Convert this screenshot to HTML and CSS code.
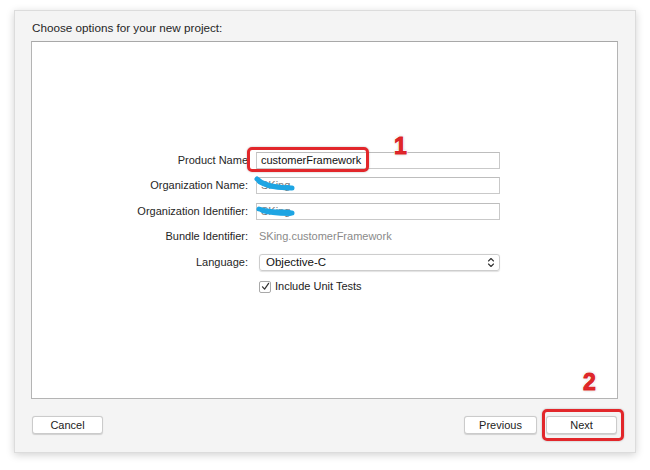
FILE: index.html
```html
<!DOCTYPE html>
<html>
<head>
<meta charset="utf-8">
<link rel="stylesheet" href="styles.css">
</head>
<body>
<div class="window">
  <div class="title">Choose options for your new project:</div>
  <div class="content">
    <div class="form">
      <div class="label">Product Name</div>
      <div class="field">customerFramework</div>
      <div class="label">Organization Name:</div>
      <div class="field dim">SKing</div>
      <div class="label">Organization Identifier:</div>
      <div class="field dim">SKing</div>
      <div class="label">Bundle Identifier:</div>
      <div class="static">SKing.customerFramework</div>
      <div class="label">Language:</div>
      <div class="popup"><span>Objective-C</span>
        <svg class="arrows" width="8" height="11" viewBox="0 0 8 11"><path d="M1.5 4 L4 1.5 L6.5 4 M1.5 7 L4 9.5 L6.5 7" fill="none" stroke="#333" stroke-width="1.1" stroke-linecap="round" stroke-linejoin="round"/></svg>
      </div>
      <div class="label"></div>
      <div class="check"><span class="box"><svg width="9" height="9" viewBox="0 0 9 9"><path d="M1.5 4.8 L3.6 7.2 L7.6 1.3" fill="none" stroke="#333" stroke-width="1.2" stroke-linecap="round" stroke-linejoin="round"/></svg></span>Include Unit Tests</div>
    </div>
  </div>
  <div class="buttons">
    <div class="btn">Cancel</div>
    <div class="spacer"></div>
    <div class="btn prev">Previous</div>
    <div class="btn next">Next</div>
  </div>
</div>
<div class="mark box1"></div>
<div class="mark box2"></div>
<div class="num n1">1</div>
<div class="num n2">2</div>
<svg class="scribble" width="650" height="470" viewBox="0 0 650 470">
  <path d="M257 179 C 262 184, 270 186, 278 187 C 284 188, 289 188, 292 188" fill="none" stroke="#1ea5e3" stroke-width="5" stroke-linecap="round"/>
  <path d="M259 182 C 266 186, 276 189, 288 187" fill="none" stroke="#1ea5e3" stroke-width="4" stroke-linecap="round"/>
  <path d="M259 209 C 265 211, 275 212, 284 212 C 288 212, 291 213, 292 213" fill="none" stroke="#1ea5e3" stroke-width="5" stroke-linecap="round"/>
  <path d="M262 211 C 270 214, 282 214, 290 214" fill="none" stroke="#1ea5e3" stroke-width="4" stroke-linecap="round"/>
</svg>
</body>
</html>
```
FILE: styles.css
```css
html, body {
  margin: 0;
  padding: 0;
  background: #ffffff;
  font-family: "Liberation Sans", Arial, sans-serif;
  color: #222;
}
body {
  width: 650px;
  height: 470px;
  overflow: hidden;
  position: relative;
}
.window {
  margin: 10px 0 0 14px;
  width: 620px;
  height: 441px;
  background: #f4f4f4;
  border: 1px solid #dcdcdc;
  box-shadow: 0 2px 8px rgba(0,0,0,0.18);
  display: flex;
  flex-direction: column;
}
.title {
  font-size: 11.7px;
  padding: 10px 0 0 17px;
  height: 20px;
  line-height: 14px;
  color: #262626;
}
.content {
  margin-left: 16px;
  width: 585px;
  height: 356px;
  background: #ffffff;
  border: 1px solid #b4b4b4;
  border-top-color: #a8a8a8;
}
.form {
  display: grid;
  grid-template-columns: 216px 244px;
  grid-auto-rows: 17px;
  column-gap: 8px;
  row-gap: 8.4px;
  margin-top: 110px;
  font-size: 11px;
}
.label {
  text-align: right;
  line-height: 17px;
  color: #262626;
}
.field {
  border: 1px solid #c9c9c9;
  border-top-color: #bdbdbd;
  background: #fff;
  line-height: 15px;
  padding-left: 4px;
  color: #111;
  font-size: 11px;
}
.field.dim { color: #777; }
.static {
  line-height: 17px;
  color: #8a8a8a;
  padding-left: 3px;
}
.popup {
  border: 1px solid #cdcdcd;
  border-radius: 3px;
  box-shadow: 0 0.5px 1px rgba(0,0,0,0.12);
  display: flex;
  align-items: center;
  justify-content: space-between;
  padding: 0 4px 0 6px;
  color: #111;
  margin-left: 3px;
  font-size: 11.5px;
}
.arrows { display: block; }
.check {
  display: flex;
  align-items: center;
  padding-left: 3px;
  color: #222;
  line-height: 17px;
  margin-top: -1px;
}
.check .box {
  width: 10px;
  height: 10px;
  border: 1px solid #a9a9a9;
  border-radius: 2px;
  background: #fff;
  margin-right: 4px;
  display: flex;
  align-items: center;
  justify-content: center;
}
.check .box svg { display: block; }
.buttons {
  display: flex;
  align-items: center;
  margin-top: 17px;
  padding: 0 18px 0 17px;
}
.spacer { flex: 1; }
.btn {
  width: 69px;
  height: 16px;
  line-height: 16px;
  text-align: center;
  font-size: 11px;
  background: #fff;
  border: 1px solid #cbcbcb;
  border-radius: 3px;
  box-shadow: 0 0.5px 1px rgba(0,0,0,0.15);
  color: #222;
}
.btn.prev { width: 71px; margin-right: 9px; }
.mark {
  position: absolute;
  border: 3px solid #e2272b;
  border-radius: 5px;
  box-shadow: 0 0 2px rgba(0,0,0,0.3);
}
.box1 { left: 247px; top: 147px; width: 116px; height: 19px; }
.box2 { left: 542px; top: 409px; width: 76px; height: 26px; }
.num {
  position: absolute;
  font-family: "Liberation Sans", Arial, sans-serif;
  font-weight: bold;
  color: #e2272b;
  font-size: 23px;
  line-height: 22px;
  -webkit-text-stroke: 1px #d81f24;
  text-shadow: 1px 1px 0 #fff, -1px -1px 0 #fff, 1px -1px 0 #fff, -1px 1px 0 #fff, 0 0 3px rgba(0,0,0,0.4);
}
.n1 { left: 394px; top: 135px; }
.n2 { left: 583px; top: 371px; }
.scribble {
  position: absolute;
  left: 0;
  top: 0;
  pointer-events: none;
}
```
